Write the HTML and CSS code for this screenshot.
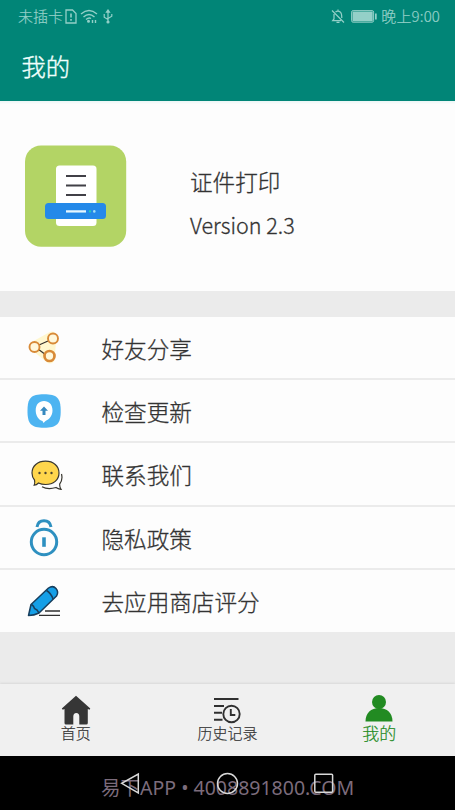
FILE: index.html
```html
<!DOCTYPE html>
<html lang="zh-CN">
<head>
<meta charset="utf-8">
<title>我的</title>
<link rel="stylesheet" href="styles.css">
</head>
<body>
<div class="screen">
  <header class="header">
    <div class="status">
      <span class="status-text">未插卡</span>
      <svg class="sim" width="12" height="15" viewBox="0 0 12 15" fill="none" stroke="currentColor" stroke-width="1.3"><path d="M1 1h6.5L11 4.5V14H1z"/><path d="M6 4.5v4M6 10v1.7" stroke-width="1.6"/></svg>
      <svg class="wifi" width="18" height="15" viewBox="0 0 18 15" fill="none" stroke="currentColor" stroke-width="1.4"><path d="M1 5Q9-2 17 5M3.5 8Q9 3 14.500 8M6 10.500Q9 8 11 9.500"/><circle cx="8.500" cy="12.300" r=".8" fill="currentColor"/><path d="M12.500 11v3M15.500 11v3"/></svg>
      <svg class="usb" width="10" height="15" viewBox="0 0 10 15" fill="none" stroke="currentColor" stroke-width="1.2"><path d="M5 2v11M1.200 5v3.200L5 10.500M8.800 5v2.200L5 9.500M3.500 3.200L5 1l1.500 2.200z"/><circle cx="5" cy="13" r="1" fill="currentColor"/></svg>
      <span class="spacer"></span>
      <svg class="bell" width="14" height="15" viewBox="0 0 14 15" fill="none" stroke="currentColor" stroke-width="1.2"><path d="M4.500 3Q7 1 9.500 3.200Q10.800 4.500 10.800 9M3 5v5l-1.300 1.600H10M5.500 13.300h3M7 .5v1.700M1 1.500l12 12"/></svg>
      <svg class="battery" width="26" height="13" viewBox="0 0 26 13"><rect x=".6" y=".6" width="22" height="11.600" rx="1.500" fill="none" stroke="currentColor"/><rect x="1.500" y="1.500" width="20.200" height="9.800" fill="currentColor"/><rect x="24" y="3.500" width="1.700" height="6" fill="currentColor"/></svg>
      <span class="clock">晚上9:00</span>
    </div>
    <h1 class="title">我的</h1>
  </header>

  <section class="profile">
    <svg class="logo" width="102" height="102" viewBox="0 0 102 102"><rect x="0" y=".5" width="101.200" height="101.200" rx="16" fill="#b3d465"/><rect x="31" y="20.500" width="40.500" height="60.500" rx="3.500" fill="#fff"/><path d="M41 31h20M41 40.500h20M41 50h20" stroke="#414047" stroke-width="2"/><rect x="20" y="58" width="61" height="16" rx="3.500" fill="#2489e9"/><path d="M41 66.400h20" stroke="#e6f7ff" stroke-width="2.300"/><circle cx="65" cy="66.400" r="1.100" fill="#27d2ad"/><circle cx="69.300" cy="66.400" r="1.300" fill="#a4def5"/></svg>
    <div class="about">
      <div class="app-name">证件打印</div>
      <div class="version">Version 2.3</div>
    </div>
  </section>

  <ul class="menu">
    <li class="row">
      <svg class="icon" width="38" height="38" viewBox="0 0 38 38" fill="none"><path d="M9 17L27 7 25 30z" fill="#fff7cf" stroke="#fff7cf" stroke-width="9" stroke-linejoin="round"/><path d="M14 16L23 12M13 20l8 6" stroke="#35302b" stroke-width="1.200"/><g fill="#fff8dc" stroke="#d88a38"><circle cx="9.500" cy="18" r="5" stroke-width="1.900"/><circle cx="28" cy="9.500" r="5" stroke-width="1.900"/><circle cx="24.500" cy="27" r="5" stroke-width="2.700"/></g></svg>
      <span>好友分享</span>
    </li>
    <li class="row">
      <svg class="icon" width="38" height="38" viewBox="0 0 38 38"><path d="M19 2.300C32 2.300 35.700 6 35.700 19S32 35.700 19 35.700 2.500 32 2.500 19 6 2.300 19 2.300z" fill="#4db4f1"/><path d="M19 9C24 9 27.500 12.500 27.500 18.500C27.500 24 24 27.500 20.500 29L18.500 31L17.500 29C13.500 28 10.700 23.500 10.700 18.500C10.700 12.500 14 9 19 9z" fill="#fff"/><path d="M19 14.500l4 4.200h-2.500v4.300h-3v-4.300H15z" fill="#3789bf"/></svg>
      <span>检查更新</span>
    </li>
    <li class="row">
      <svg class="icon" width="38" height="38" viewBox="0 0 38 38" fill="none" stroke="#39372f" stroke-width="1.200"><path d="M20.500 6.200C28.500 6.200 34 11 34 18S28.500 29.500 20.500 29.500Q16.500 29.500 13.500 28Q11.500 30 9.200 30.200Q10.200 27.500 9.500 25Q7 22 7 18C7 11 12.500 6.200 20.500 6.200z" fill="#ffd64c"/><path d="M36.500 19Q38 25 34.700 29Q34.500 32 36 34.300Q33 34 31 32.500Q23 35 17 31.800"/><g fill="#4b4430" stroke="none"><circle cx="14.500" cy="18" r="1.200"/><circle cx="20.500" cy="18" r="1.200"/><circle cx="26.500" cy="18" r="1.200"/></g></svg>
      <span>联系我们</span>
    </li>
    <li class="row">
      <svg class="icon" width="38" height="38" viewBox="0 0 38 38" fill="none" stroke="#2e90c0"><circle cx="19" cy="23" r="12.700" stroke-width="3"/><path d="M12 8Q13 1.800 19 1.800T26 8" stroke-width="3"/><path d="M19 18.300v9.500" stroke-width="3.600"/></svg>
      <span>隐私政策</span>
    </li>
    <li class="row">
      <svg class="icon" width="38" height="38" viewBox="0 0 38 38" fill="none" stroke="#173e5d" stroke-width="1.500"><path d="M3.500 33.500L6 22.500 23.500 6Q28 3 31 6.500T31.500 14L14 31Q9 33.500 3.500 33.500z" fill="#159fe7" stroke-linejoin="round"/><path d="M6.500 22.500Q9 24 9.500 26.500Q12.500 27.500 14 31M21.500 8.500Q26 11 28 17"/><path d="M20 29h15M14 33.300h21" stroke="#303030" stroke-width="1.300"/></svg>
      <span>去应用商店评分</span>
    </li>
  </ul>

  <nav class="tabs">
    <div class="tab">
      <svg width="30" height="30" viewBox="0 0 30 30" fill="#363636"><path d="M15 .700L29.300 13.500l-.8 1.300-1.700-.9V28q0 1.500-1.500 1.500H18.300V21.500q0-3.500-3-3.500t-3 3.500v8H5Q3.500 29.500 3.500 28V13.900l-1.700.9-1-1.300z"/></svg>
      <span>首页</span>
    </div>
    <div class="tab">
      <svg width="30" height="30" viewBox="0 0 30 30" fill="none" stroke="#303030" stroke-width="1.900"><path d="M2 4h24.500M2 11h10M2 17.800h8M2 24.800h8.500"/><circle cx="19.500" cy="19" r="8.200"/><path d="M18.800 14v6h4.500"/></svg>
      <span>历史记录</span>
    </div>
    <div class="tab active">
      <svg width="30" height="30" viewBox="0 0 30 30" fill="#228b22"><circle cx="15" cy="7" r="7"/><path d="M1.500 26.500C1.500 18 7 13 15 13S28.500 18 28.500 26.500z"/></svg>
      <span>我的</span>
    </div>
  </nav>

  <footer class="system">
    <span class="watermark">易下APP • 4008891800.COM</span>
    <svg class="keys" width="455" height="54" viewBox="0 0 455 54" fill="none" stroke="#d8d8d8" stroke-width="1.500"><path d="M138.300 18v19L121.700 27.300z"/><circle cx="227.500" cy="27.500" r="10"/><rect x="314.800" y="18.200" width="17.800" height="18" rx="1"/></svg>
  </footer>
</div>
</body>
</html>
```
FILE: styles.css
```css
* { box-sizing: border-box; }
body {
  margin: 0;
  font-family: "Noto Sans", "Noto Sans CJK SC", sans-serif;
  color: #333;
}
.screen {
  width: 455px;
  height: 810px;
  display: flex;
  flex-direction: column;
  background: #ebebeb;
  overflow: hidden;
}
.header {
  height: 101px;
  flex: none;
  background: #018577;
  color: #effffc;
}
.status {
  height: 32px;
  display: flex;
  align-items: center;
  padding: 0 15px 0 18px;
  color: #94d0c8;
  font-family: "Noto Sans CJK SC", sans-serif;
  font-size: 15px;
  font-weight: 300;
  line-height: 32px;
  white-space: nowrap;
  -webkit-text-stroke: 0.2px currentColor;
}
.sim { margin-left: 2px; }
.wifi { margin-left: 3px; }
.usb { margin-left: 5px; }
.spacer { flex: 1; }
.bell { margin-right: 6px; }
.battery { margin-right: 4px; }
.clock { letter-spacing: 0.15px; }
.title {
  margin: 0;
  padding-left: 21.500px;
  font: 300 24.300px/67px "Noto Sans CJK SC", sans-serif;
  -webkit-text-stroke: 0.4px currentColor;
}
.profile {
  height: 190px;
  flex: none;
  display: flex;
  align-items: center;
  gap: 63px;
  padding-left: 25px;
  background: #fdfdfd;
  box-shadow: inset 0 3px 2px -1px #eef7f7;
}
.app-name, .version {
  height: 44px;
  line-height: 44px;
  white-space: nowrap;
  font-family: "Noto Sans CJK SC", sans-serif;
  font-weight: 300;
  -webkit-text-stroke: 0.3px currentColor;
}
.about { margin-top: 14px; }
.app-name {
  font-size: 22.600px;
  line-height: 46px;
}
.version { font-size: 21.500px; }
.menu {
  list-style: none;
  margin: 26px 0 0;
  padding: 0;
  flex: none;
}
.row {
  height: 63.200px;
  display: flex;
  align-items: center;
  gap: 38.500px;
  padding: 1px 0 0 25px;
  background: #fdfdfd;
  border-bottom: 2px solid #ebebeb;
  font: 300 22.600px/58px "Noto Sans CJK SC", sans-serif;
  -webkit-text-stroke: 0.3px currentColor;
}
.row span { padding-top: 2px; }
.row:last-child { height: 62px; border-bottom-width: 0; }
.tabs {
  height: 72px;
  flex: none;
  margin-top: auto;
  display: grid;
  grid-template-columns: repeat(3, 1fr);
  background: #f0f0f0;
  box-shadow: 0 -1px 2px #d8d8d8;
}
.tab {
  display: flex;
  flex-direction: column;
  align-items: center;
  padding-top: 11px;
  font: 300 15px/15px "Noto Sans CJK SC", sans-serif;
  -webkit-text-stroke: 0.2px currentColor;
}
.active { color: #228b22; font-size: 17px; }
.system {
  height: 54px;
  flex: none;
  position: relative;
  background: #000;
}
.watermark {
  display: block;
  padding: 11px 0 0 101px;
  color: #7c6c7c;
  font-size: 19.500px;
  line-height: 42px;
  white-space: nowrap;
}
.keys { position: absolute; left: 0; top: 0; }
```
